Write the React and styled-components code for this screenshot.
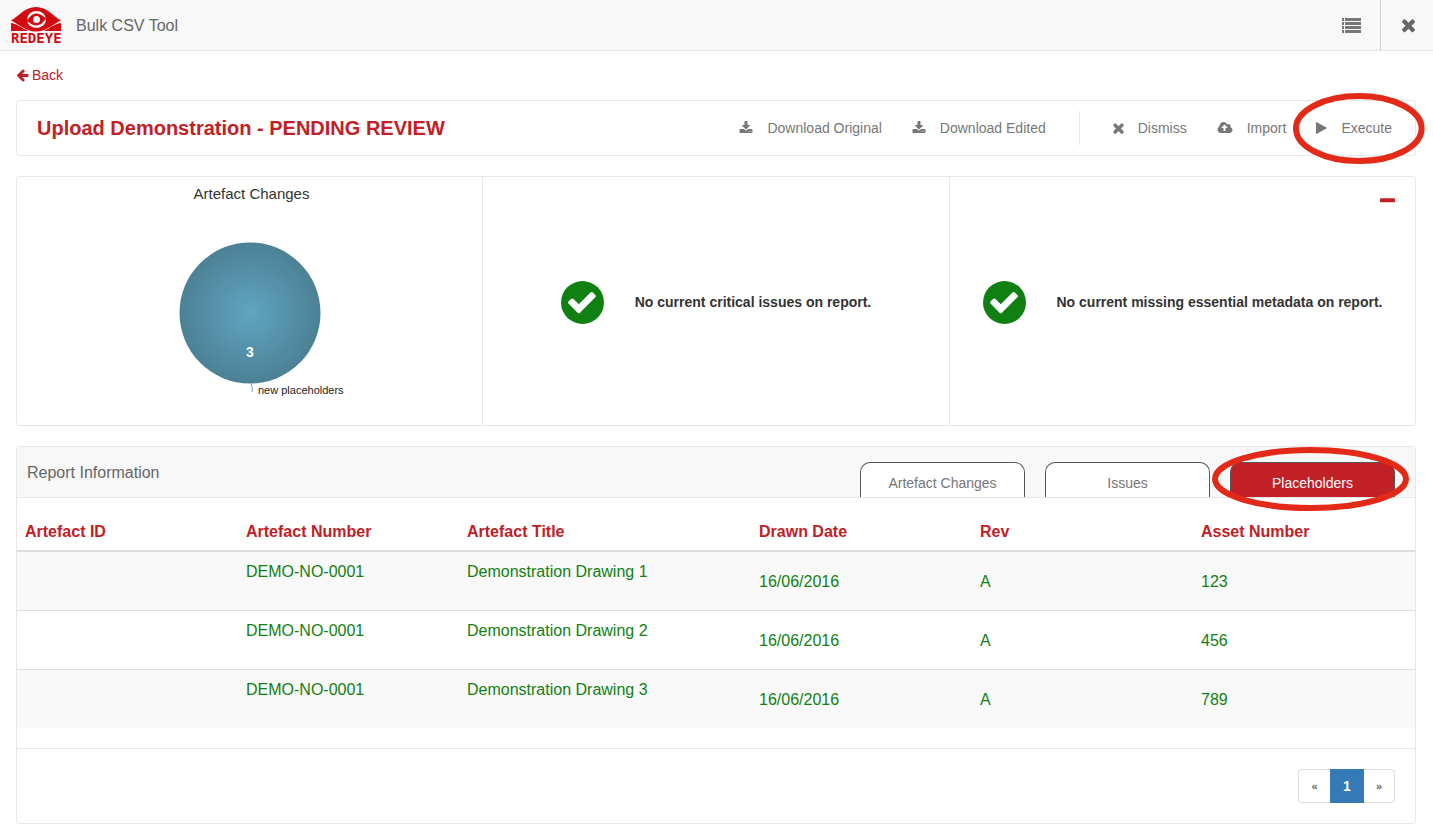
import React from 'react';
import styled, { createGlobalStyle } from 'styled-components';

const glyphs = {
  times: {
    box: '302 0 1188 1792',
    d: 'M1490 1322q0 40-28 68l-136 136q-28 28-68 28t-68-28l-294-294-294 294q-28 28-68 28t-68-28l-136-136q-28-28-28-68t28-68l294-294-294-294q-28-28-28-68t28-68l136-136q28-28 68-28t68 28l294 294 294-294q28-28 68-28t68 28l136 136q28 28 28 68t-28 68l-294 294 294 294q28 28 28 68z',
  },
  download: {
    box: '64 0 1664 1792',
    d: 'M1344 1344q0-26-19-45t-45-19-45 19-19 45 19 45 45 19 45-19 19-45zm256 0q0-26-19-45t-45-19-45 19-19 45 19 45 45 19 45-19 19-45zm128-224v320q0 40-28 68t-68 28h-1472q-40 0-68-28t-28-68v-320q0-40 28-68t68-28h465l135 136q58 56 136 56t136-56l136-136h464q40 0 68 28t28 68zm-325-569q17 41-14 70l-448 448q-18 19-45 19t-45-19l-448-448q-31-29-14-70 17-39 59-39h256v-448q0-26 19-45t45-19h256q26 0 45 19t19 45v448h256q42 0 59 39z',
  },
  upload: {
    box: '-64 0 1920 1792',
    d: 'M1216 864q0-14-9-23l-352-352q-9-9-23-9t-23 9l-351 351q-10 12-10 24 0 14 9 23t23 9h224v352q0 13 9.5 22.5t22.5 9.5h192q13 0 22.5-9.5t9.5-22.5v-352h224q13 0 22.5-9.5t9.5-22.5zm640 288q0 159-112.5 271.5t-271.5 112.5h-1088q-185 0-316.5-131.5t-131.5-316.5q0-130 70-240t188-165q-2-30-2-43 0-212 150-362t362-150q156 0 285.5 87t188.5 231q71-62 166-62 106 0 181 75t75 181q0 76-41 138 130 31 213.5 135.5t83.5 238.5z',
  },
  play: {
    box: '192 0 1408 1792',
    d: 'M1576 927l-1328 738q-23 13-39.5 3t-16.5-36v-1472q0-26 16.5-36t39.5 3l1328 738q23 13 23 31t-23 31z',
  },
  back: {
    box: '64 0 1664 1792',
    d: 'M1664 896v128q0 53-32.5 90.5t-84.5 37.5h-704l293 294q38 36 38 90t-38 90l-75 76q-37 37-90 37-52 0-91-37l-651-652q-37-37-37-90 0-52 37-91l651-650q38-38 91-38 52 0 90 38l75 74q38 38 38 91t-38 91l-293 293h704q52 0 84.5 37.5t32.5 90.5z',
  },
  check: {
    box: '0 0 1792 1792',
    d: 'M1671 566q0 40-28 68l-724 724-136 136q-28 28-68 28t-68-28l-136-136-362-362q-28-28-28-68t28-68l136-136q28-28 68-28t68 28l294 295 656-657q28-28 68-28t68 28l136 136q28 28 28 68z',
  },
  minus: {
    box: '192 0 1408 1792',
    d: 'M1600 736v192q0 40-28 68t-68 28h-1216q-40 0-68-28t-28-68v-192q0-40 28-68t68-28h1216q40 0 68 28t28 68z',
  },
  list: {
    box: '0 0 20 16',
    d: 'M1 1h2v3H1zM1 5h2v3H1zM1 9h2v3H1zM1 13h2v3H1zM4 1h16v3H4zM4 5h16v3H4zM4 9h16v3H4zM4 13h16v3H4z',
  },
};

const Glyph = ({ name, width, height }) => (
  <svg width={width} height={height} viewBox={glyphs[name].box} fill="currentColor" aria-hidden="true">
    <path d={glyphs[name].d} />
  </svg>
);

const Logo = () => (
  <svg width="56" height="44" viewBox="0 -3 56 44" role="img" aria-label="Redeye">
    <path fill="#d20a11" d="M1 14.5C9 10 15 1 26 1s17 9 25 13.5C43 18 37 25.5 26 25.5S9 18 1 14.5z" />
    <ellipse cx="26.5" cy="13.500" rx="9.5" ry="8.5" fill="#f8f8f8" />
    <path fill="#d20a11" d="M16 15c3-2 5-7.5 10.500-7.500 5 0 6.500 4 10.500 4.500-3 2-5 7.500-10.500 7.500-4.500 0-7-3.500-10.500-4.500z" />
    <circle cx="26.5" cy="13.5" r="3.5" fill="#f8f8f8" />
    <path fill="#d20a11" d="M1 17c7 1 11 5 17 8H1zM51 17c-7 1-11 5-17 8h17z" />
    <text x="1" y="37" fontFamily="'DejaVu Sans Mono', monospace" fontSize="14" fontWeight="700" fill="#d20a11">REDEYE</text>
  </svg>
);

const PieChart = () => (
  <svg width="300" height="210" viewBox="0 0 300 210" role="img" aria-label="3 new placeholders">
    <defs>
      <radialGradient id="slice">
        <stop offset="0" stopColor="#60a5c1" />
        <stop offset="1" stopColor="#4c8195" />
      </radialGradient>
    </defs>
    <circle cx="150" cy="109" r="70.5" fill="url(#slice)" />
    <path d="M151 180q2 3 1 8" fill="none" stroke="#60a5c1" strokeWidth="1" />
    <text x="150" y="153" textAnchor="middle" fontSize="14" fontWeight="700" fill="#fff">3</text>
    <text x="158" y="190" fontSize="11" fill="#222">new placeholders</text>
  </svg>
);

const columns = ['Artefact ID', 'Artefact Number', 'Artefact Title', 'Drawn Date', 'Rev', 'Asset Number'];

const placeholders = [
  { number: 'DEMO-NO-0001', title: 'Demonstration Drawing 1', date: '16/06/2016', rev: 'A', asset: '123' },
  { number: 'DEMO-NO-0001', title: 'Demonstration Drawing 2', date: '16/06/2016', rev: 'A', asset: '456' },
  { number: 'DEMO-NO-0001', title: 'Demonstration Drawing 3', date: '16/06/2016', rev: 'A', asset: '789' },
];

const tabs = ['Artefact Changes', 'Issues', 'Placeholders'];

const Ring = () => (
  <RingSvg preserveAspectRatio="none" viewBox="0 0 100 100" aria-hidden="true">
    <ellipse cx="50" cy="50" rx="50" ry="50" vectorEffect="non-scaling-stroke" />
  </RingSvg>
);

const App = () => {
  const [activeTab, setActiveTab] = React.useState('Placeholders');
  const [open, setOpen] = React.useState(true);

  return (
    <>
      <GlobalStyle />
      <TopBar>
        <Brand>
          <Logo />
          <h1>Bulk CSV Tool</h1>
        </Brand>
        <BarButton type="button" aria-label="Menu"><Glyph name="list" width={20} height={16} /></BarButton>
        <BarButton type="button" aria-label="Close" $divided><Glyph name="times" width={13} height={20} /></BarButton>
      </TopBar>

      <Main>
        <BackLink href="#back">
          <Glyph name="back" width={13} height={14} />
          Back
        </BackLink>

        <TitlePanel>
          <Title>Upload Demonstration - PENDING REVIEW</Title>
          <Actions>
            <Action type="button">
              <Glyph name="download" width={14} height={14} />
              Download Original
            </Action>
            <Action type="button">
              <Glyph name="download" width={14} height={14} />
              Download Edited
            </Action>
            <Divider />
            <Action type="button">
              <Glyph name="times" width={11} height={16} />
              Dismiss
            </Action>
            <Action type="button">
              <Glyph name="upload" width={16} height={14} />
              Import
            </Action>
            <Action type="button">
              <Glyph name="play" width={11} height={14} />
              Execute
              <ExecuteMark><Ring /></ExecuteMark>
            </Action>
          </Actions>
        </TitlePanel>

        <Summary>
          <ChartCell>
            <h2>Artefact Changes</h2>
            {open && <PieChart />}
          </ChartCell>
          <StatusCell>
            <Tick><Glyph name="check" width={32} height={32} /></Tick>
            No current critical issues on report.
          </StatusCell>
          <StatusCell>
            <Tick><Glyph name="check" width={32} height={32} /></Tick>
            No current missing essential metadata on report.
            <Collapse type="button" aria-label="Collapse" onClick={() => { setOpen(!open); }}>
              <Glyph name="minus" width={15} height={20} />
            </Collapse>
          </StatusCell>
        </Summary>

        <Panel>
          <ReportHeader>
            <h2>Report Information</h2>
            <Tabs role="tablist">
              {tabs.map((tab) => (
                <Tab
                  key={tab}
                  type="button"
                  role="tab"
                  aria-selected={tab === activeTab}
                  $active={tab === activeTab}
                  onClick={() => { setActiveTab(tab); }}
                >
                  {tab}
                  {tab === 'Placeholders' && <TabMark><Ring /></TabMark>}
                </Tab>
              ))}
            </Tabs>
          </ReportHeader>
          <Table>
            <colgroup>
              <Col $share={221} />
              <Col $share={221} />
              <Col $share={292} />
              <Col $share={221} />
              <Col $share={221} />
              <Col $share={222} />
            </colgroup>
            <thead>
              <tr>
                {columns.map((column) => <th key={column} scope="col">{column}</th>)}
              </tr>
            </thead>
            <tbody>
              {placeholders.map((row) => (
                <tr key={row.title}>
                  <Cell />
                  <Cell>{row.number}</Cell>
                  <Cell>{row.title}</Cell>
                  <Cell $inset>{row.date}</Cell>
                  <Cell $inset>{row.rev}</Cell>
                  <Cell $inset>{row.asset}</Cell>
                </tr>
              ))}
            </tbody>
          </Table>
          <Footer>
            <Pager aria-label="Pages">
              <PageLink href="#previous" aria-label="Previous">«</PageLink>
              <PageLink href="#1" aria-current="page" $current>1</PageLink>
              <PageLink href="#next" aria-label="Next">»</PageLink>
            </Pager>
          </Footer>
        </Panel>
      </Main>
    </>
  );
};

export default App;

const GlobalStyle = createGlobalStyle`
  * {
    box-sizing: border-box;
  }
  body {
    margin: 0;
    background: #fff;
    color: #333;
    font-family: "Liberation Sans", Arial, sans-serif;
    font-size: 14px;
    line-height: 20px;
  }
  h1, h2 {
    margin: 0;
    font-weight: 400;
  }
  button {
    margin: 0;
    padding: 0;
    border: 0;
    background: none;
    font: inherit;
    cursor: pointer;
  }
  svg {
    display: block;
    flex: none;
  }
`;

const TopBar = styled.header`
  display: flex;
  height: 51px;
  background: #f8f8f8;
  border-bottom: 1px solid #e7e7e7;
`;

const Brand = styled.div`
  flex: 1;
  display: flex;
  align-items: center;
  gap: 10px;
  padding-left: 10px;
  color: #666;
  h1{
    padding-top: 2px;
    font-size: 16px;
  }
`;

const BarButton = styled.button`
  display: flex;
  align-items: center;
  justify-content: center;
  width: ${({ $divided }) => ($divided ? '53px' : '59px')};
  padding-left: ${({ $divided }) => ($divided ? '2px' : '0')};
  border-left: ${({ $divided }) => ($divided ? '1px solid #ccc' : '0')};
  color: ${({ $divided }) => ($divided ? '#666' : '#777')};
`;

const Main = styled.main`
  padding: 14px 17px 10px 16px;
`;

const BackLink = styled.a`
  display: inline-flex;
  align-items: center;
  gap: 3px;
  height: 20px;
  margin-bottom: 15px;
  color: #c12026;
  text-decoration: none;
`;

const Panel = styled.section`
  border: 1px solid #e7e7e7;
  border-radius: 3px;
  margin-bottom: 20px;
  &:last-child{
    margin-bottom: 0;
  }
`;

const TitlePanel = styled(Panel)`
  display: flex;
  align-items: center;
  justify-content: space-between;
  height: 56px;
  padding: 0 23px 0 20px;
`;

const Title = styled.h2`
  color: #c12026;
  font-size: 20px;
  font-weight: 700;
`;

const Actions = styled.div`
  display: flex;
  align-items: center;
  gap: 30px;
`;

const Action = styled.button`
  position: relative;
  display: flex;
  align-items: center;
  gap: 14px;
  color: #777;
`;

const Divider = styled.div`
  width: 1px;
  height: 34px;
  margin: 0 3px;
  background: #e7e7e7;
`;

const RingSvg = styled.svg`
  width: 100%;
  height: 100%;
  overflow: visible;
  fill: none;
  stroke: #e32a18;
  stroke-width: 6px;
`;

const Mark = styled.span`
  position: absolute;
  z-index: 1;
  pointer-events: none;
`;

const ExecuteMark = styled(Mark)`
  inset: -22px -30px -23px -20px;
`;

const TabMark = styled(Mark)`
  inset: -13px -12px -11px -16px;
`;

const Summary = styled(Panel)`
  display: grid;
  grid-template-columns: repeat(3, 1fr);
  min-height: 250px;
`;

const ChartCell = styled.div`
  display: flex;
  flex-direction: column;
  align-items: center;
  padding-top: 7px;
  border-right: 1px solid #e7e7e7;
  h2{
    padding-left: 4px;
    font-size: 15px;
  }
`;

const StatusCell = styled.div`
  position: relative;
  display: flex;
  align-items: center;
  justify-content: center;
  gap: 31px;
  padding-top: 2px;
  font-weight: 700;
  & + &{
    border-left: 1px solid #e7e7e7;
  }
`;

const Tick = styled.span`
  display: flex;
  align-items: center;
  justify-content: center;
  width: 43px;
  height: 43px;
  border-radius: 50%;
  background: #118013;
  color: #fff;
`;

const Collapse = styled.button`
  position: absolute;
  top: 14px;
  right: 20px;
  color: #c12026;
`;

const ReportHeader = styled.header`
  display: flex;
  align-items: center;
  justify-content: space-between;
  height: 51px;
  padding: 0 20px 0 10px;
  background: #f8f8f8;
  border-bottom: 1px solid #e7e7e7;
  color: #666;
  h2{
    padding-top: 2px;
    font-size: 16px;
  }
`;

const Tabs = styled.div`
  align-self: flex-end;
  display: flex;
  gap: 20px;
`;

const Tab = styled.button`
  position: relative;
  width: 165px;
  height: 35px;
  padding-top: 6px;
  border: 1px solid #555;
  border-bottom: 0;
  border-radius: 10px 10px 0 0;
  background: ${({ $active }) => ($active ? '#c12026' : '#fff')};
  color: ${({ $active }) => ($active ? '#fff' : '#777')};
`;

const Table = styled.table`
  width: 100%;
  margin-bottom: 20px;
  border-collapse: separate;
  border-spacing: 0;
  table-layout: fixed;
  font-size: 16px;
  th{
    height: 54px;
    padding: 16px 8px 0;
    border-bottom: 2px solid #ddd;
    color: #c12026;
    text-align: left;
    vertical-align: middle;
  }
  tbody tr:nth-child(odd){
    background: #f9f9f9;
  }
  tbody tr + tr td{
    height: 59px;
    border-top: 1px solid #ddd;
  }
`;

const Col = styled.col`
  width: calc(100% * ${({ $share }) => $share} / 1398);
`;

const Cell = styled.td`
  height: 58px;
  padding: ${({ $inset }) => ($inset ? '20px 8px 18px' : '10px 8px')};
  color: #118013;
  vertical-align: top;
`;

const Footer = styled.footer`
  display: flex;
  justify-content: flex-end;
  padding: 20px;
  border-top: 1px solid #e7e7e7;
`;

const Pager = styled.nav`
  display: flex;
`;

const PageLink = styled.a`
  display: flex;
  align-items: center;
  justify-content: center;
  width: ${({ $current }) => ($current ? '34px' : '32px')};
  height: 34px;
  border: 1px solid ${({ $current }) => ($current ? '#337ab7' : '#ddd')};
  background: ${({ $current }) => ($current ? '#337ab7' : '#fff')};
  color: ${({ $current }) => ($current ? '#fff' : '#666')};
  font-size: ${({ $current }) => ($current ? '14px' : '11px')};
  font-weight: 700;
  text-decoration: none;
  &:first-child{
    border-right: 0;
    border-radius: 4px 0 0 4px;
  }
  &:last-child{
    width: 31px;
    border-left: 0;
    border-radius: 0 4px 4px 0;
  }
`;
